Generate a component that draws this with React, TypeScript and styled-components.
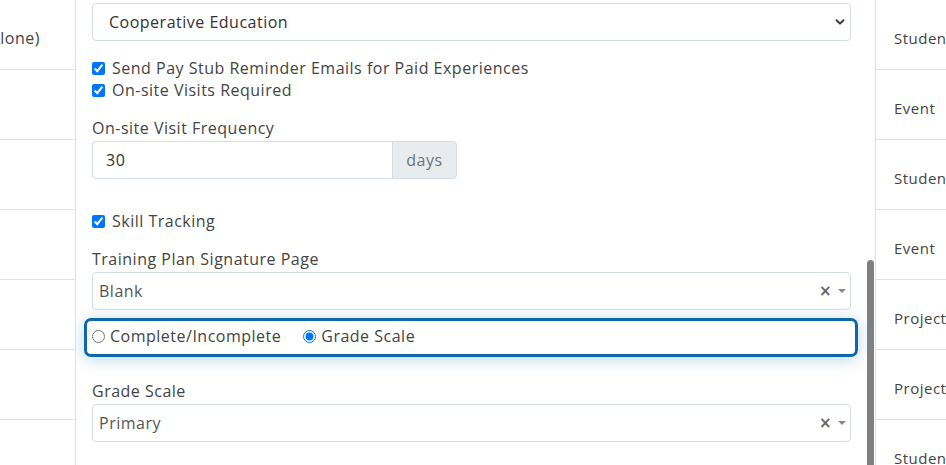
import styled, { createGlobalStyle } from "styled-components";

const GlobalStyle = createGlobalStyle`
	html, body {
		margin: 0;
		padding: 0;
		background: #fff;
	}
	body {
		font-family: "Open Sans", "Liberation Sans", sans-serif;
		letter-spacing: 0.5px;
		color: #444;
	}
`;

const leftCells = ["(Stand-alone)", "", "", "", "", "", ""];
const rightCells = ["Studen", "Event", "Studen", "Event", "Project", "Project", "Studen"];

export default function App() {
	return (
		<>
			<GlobalStyle />
			<Page>
				<TableColumn $side="left">
					{leftCells.map((text, i) => (
						<Cell key={i} $side="left">
							{text}
						</Cell>
					))}
				</TableColumn>

				<Modal>
					<ModalBody>
						<Label>Default Experience Type</Label>
						<SelectBox>
							<span>Cooperative Education</span>
							<Chevron />
						</SelectBox>

						<CheckList>
							<CheckRow>
								<Check type="checkbox" defaultChecked />
								Send Pay Stub Reminder Emails for Paid Experiences
							</CheckRow>
							<CheckRow>
								<Check type="checkbox" defaultChecked />
								On-site Visits Required
							</CheckRow>
						</CheckList>

						<Label>On-site Visit Frequency</Label>
						<InputGroup>
							<TextInput defaultValue="30" />
							<Addon>days</Addon>
						</InputGroup>

						<CheckList $top={31}>
							<CheckRow>
								<Check type="checkbox" defaultChecked />
								Skill Tracking
							</CheckRow>
						</CheckList>

						<Label>Training Plan Signature Page</Label>
						<Select2Box>
							<span>Blank</span>
							<Select2Icons>
								<ClearMark>×</ClearMark>
								<Caret />
							</Select2Icons>
						</Select2Box>

						<RadioGroup>
							<RadioOption>
								<Radio type="radio" name="grading" />
								Complete/Incomplete
							</RadioOption>
							<RadioOption>
								<Radio type="radio" name="grading" defaultChecked />
								Grade Scale
							</RadioOption>
						</RadioGroup>

						<Label>Grade Scale</Label>
						<Select2Box>
							<span>Primary</span>
							<Select2Icons>
								<ClearMark>×</ClearMark>
								<Caret />
							</Select2Icons>
						</Select2Box>
					</ModalBody>
					<ScrollThumb />
				</Modal>

				<TableColumn $side="right">
					{rightCells.map((text, i) => (
						<Cell key={i} $side="right">
							{text}
						</Cell>
					))}
				</TableColumn>
			</Page>
		</>
	);
}

function Chevron() {
	return (
		<svg width="10" height="8" viewBox="0 0 10 8">
			<path
				d="M1.5 2.2 L5 5.6 L8.5 2.2"
				fill="none"
				stroke="#343a40"
				strokeWidth="2"
				strokeLinecap="round"
				strokeLinejoin="round"
			/>
		</svg>
	);
}

function Caret() {
	return (
		<svg width="8" height="5" viewBox="0 0 8 5">
			<path d="M0 0 L8 0 L4 4 Z" fill="#888" />
		</svg>
	);
}

const Page = styled.div`
	display: flex;
	width: 946px;
	height: 465px;
	overflow: hidden;
`;

const TableColumn = styled.div<{ $side: "left" | "right" }>`
	display: flex;
	flex-direction: column;
	flex: 0 0 ${({ $side }) => ($side === "left" ? "75px" : "70px")};
	overflow: hidden;
	${({ $side }) =>
		$side === "left"
			? "border-right: 1px solid #dbe2e8;"
			: "border-left: 1px solid #dbe2e8;"}
`;

const Cell = styled.div<{ $side: "left" | "right" }>`
	flex: 0 0 70px;
	box-sizing: border-box;
	display: flex;
	align-items: center;
	justify-content: ${({ $side }) => ($side === "left" ? "flex-end" : "flex-start")};
	padding: ${({ $side }) => ($side === "left" ? "6px 35px 0 0" : "6px 0 0 18px")};
	border-bottom: 1px solid #dbe2e8;
	font-size: ${({ $side }) => ($side === "left" ? "16px" : "15px")};
	color: #444;
	white-space: nowrap;
	overflow: hidden;
`;

const Modal = styled.div`
	position: relative;
	flex: 1 1 auto;
	background: #fff;
	overflow: hidden;
`;

const ModalBody = styled.div`
	display: flex;
	flex-direction: column;
	padding: 0 24px 0 16px;
	margin-top: -21px;
`;

const Label = styled.div`
	height: 22px;
	line-height: 22px;
	margin: 16px 0 2px;
	font-size: 16px;
	color: #444;
	white-space: nowrap;

	&:first-child {
		margin-top: 0;
	}
`;

const SelectBox = styled.div`
	display: flex;
	align-items: center;
	justify-content: space-between;
	height: 38px;
	box-sizing: border-box;
	padding: 0 5px 0 16px;
	border: 1px solid #d4dde4;
	border-radius: 4px;
	font-size: 16px;
	color: #333;
`;

const CheckList = styled.div<{ $top?: number }>`
	display: flex;
	flex-direction: column;
	margin-top: ${({ $top }) => $top ?? 16}px;
`;

const CheckRow = styled.label`
	display: flex;
	align-items: center;
	height: 22px;
	font-size: 16px;
	color: #444;
	white-space: nowrap;
`;

const Check = styled.input`
	width: 13px;
	height: 13px;
	margin: 0 7px 0 0;
`;

const InputGroup = styled.div`
	display: flex;
	width: 365px;
	height: 38px;
`;

const TextInput = styled.input`
	flex: 1 1 auto;
	min-width: 0;
	box-sizing: border-box;
	padding: 0 13px;
	border: 1px solid #d4dde4;
	border-right: none;
	border-radius: 4px 0 0 4px;
	font-family: inherit;
	letter-spacing: inherit;
	font-size: 16px;
	color: #333;
	outline: none;
`;

const Addon = styled.div`
	flex: 0 0 65px;
	box-sizing: border-box;
	display: flex;
	align-items: center;
	justify-content: center;
	background: #e9ecef;
	border: 1px solid #d4dde4;
	border-radius: 0 4px 4px 0;
	font-size: 16px;
	color: #6c757d;
`;

const Select2Box = styled.div`
	display: flex;
	align-items: center;
	justify-content: space-between;
	height: 38px;
	box-sizing: border-box;
	padding: 0 4px 0 6px;
	border: 1px solid #d4dde4;
	border-radius: 4px;
	font-size: 16px;
	color: #555;
`;

const Select2Icons = styled.div`
	display: flex;
	align-items: center;
	gap: 6px;
`;

const ClearMark = styled.span`
	font-family: "DejaVu Sans", sans-serif;
	font-size: 15px;
	font-weight: bold;
	color: #666;
	line-height: 1;
`;

const RadioGroup = styled.div`
	display: flex;
	align-items: center;
	gap: 22px;
	height: 39px;
	box-sizing: border-box;
	margin: 8px -7px 7px -8px;
	padding: 0 5px 3px;
	border: 3px solid #0b69ab;
	border-radius: 7px;
	box-shadow: 0 2px 16px rgba(11, 105, 171, 0.28);
`;

const RadioOption = styled.label`
	display: flex;
	align-items: center;
	font-size: 16px;
	color: #444;
	white-space: nowrap;
`;

const Radio = styled.input`
	width: 13px;
	height: 13px;
	margin: 0 5px 0 0;
`;

const ScrollThumb = styled.div`
	position: absolute;
	right: 1px;
	top: 260px;
	bottom: 0;
	width: 7px;
	background: #808080;
	border-radius: 4px 4px 0 0;
`;
